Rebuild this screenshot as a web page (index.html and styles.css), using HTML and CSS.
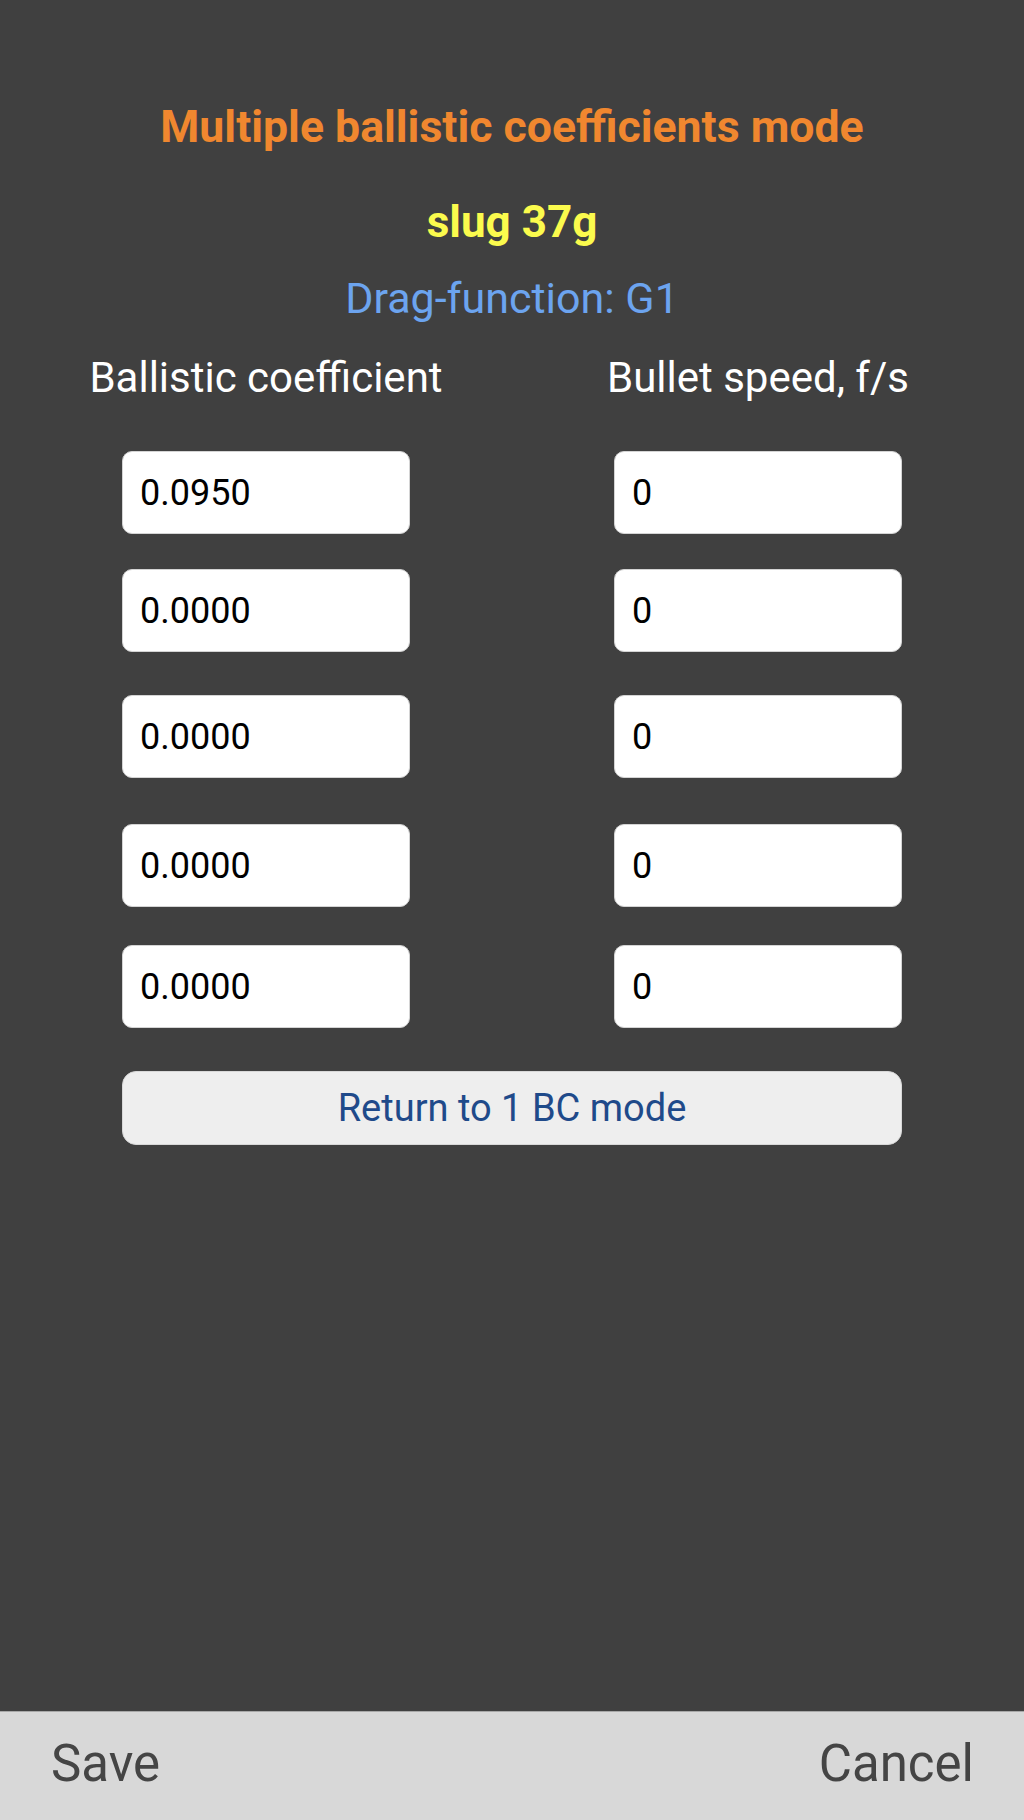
FILE: index.html
```html
<!DOCTYPE html>
<html lang="en">
<head>
<meta charset="utf-8">
<title>Multiple ballistic coefficients mode</title>
<link rel="stylesheet" href="styles.css">
</head>
<body>
<div class="screen">
  <main class="content">
    <h1 class="title">Multiple ballistic coefficients mode</h1>
    <div class="bullet-name">slug 37g</div>
    <div class="drag">Drag-function: G1</div>
    <div class="table">
      <div class="head-row">
        <div class="head">Ballistic coefficient</div>
        <div class="head">Bullet speed, f/s</div>
      </div>
      <div class="row">
        <input class="field" type="text" value="0.0950" readonly>
        <input class="field" type="text" value="0" readonly>
      </div>
      <div class="row">
        <input class="field" type="text" value="0.0000" readonly>
        <input class="field" type="text" value="0" readonly>
      </div>
      <div class="row">
        <input class="field" type="text" value="0.0000" readonly>
        <input class="field" type="text" value="0" readonly>
      </div>
      <div class="row">
        <input class="field" type="text" value="0.0000" readonly>
        <input class="field" type="text" value="0" readonly>
      </div>
      <div class="row">
        <input class="field" type="text" value="0.0000" readonly>
        <input class="field" type="text" value="0" readonly>
      </div>
    </div>
    <button class="return-btn" type="button">Return to 1 BC mode</button>
  </main>
  <footer class="bar">
    <span class="bar-btn">Save</span>
    <span class="bar-btn">Cancel</span>
  </footer>
</div>
</body>
</html>
```

FILE: styles.css
```css
* {
  box-sizing: border-box;
}

html, body {
  margin: 0;
  padding: 0;
}

body {
  background: #404040;
  font-family: Roboto, "Liberation Sans", Arial, sans-serif;
}

.screen {
  width: 1024px;
  height: 1820px;
  display: flex;
  flex-direction: column;
  background: #404040;
}

.content {
  flex: 1;
  display: flex;
  flex-direction: column;
  align-items: center;
  padding-top: 101px;
}

.title {
  margin: 0;
  font-size: 44.6px;
  line-height: 52px;
  font-weight: 700;
  color: #f0872f;
  white-space: nowrap;
}

.bullet-name {
  margin-top: 43px;
  font-size: 44px;
  line-height: 52px;
  font-weight: 700;
  color: #fbfb4d;
}

.drag {
  margin-top: 25px;
  font-size: 43px;
  line-height: 50px;
  color: #6ca4ef;
}

.table {
  width: 780px;
  margin-top: 30px;
  display: flex;
  flex-direction: column;
}

.head-row,
.row {
  display: grid;
  grid-template-columns: 288px 288px;
  justify-content: space-between;
}

.head {
  display: flex;
  justify-content: center;
  white-space: nowrap;
  font-size: 42px;
  line-height: 50px;
  color: #ffffff;
}

.row {
  height: 83px;
}

.head-row + .row {
  margin-top: 48px;
}

.row:nth-child(3) {
  margin-top: 35px;
}

.row:nth-child(4) {
  margin-top: 43px;
}

.row:nth-child(5) {
  margin-top: 46px;
}

.row:nth-child(6) {
  margin-top: 38px;
}

.field {
  width: 288px;
  height: 83px;
  margin: 0;
  padding: 0 17px;
  border: 1px solid #d4d4d4;
  border-radius: 10px;
  background: #ffffff;
  color: #000000;
  font-family: Roboto, "Liberation Sans", Arial, sans-serif;
  font-size: 36px;
  outline: none;
}

.return-btn {
  width: 780px;
  height: 74px;
  margin-top: 43px;
  border: 1px solid #d8d8d8;
  border-radius: 14px;
  background: #eeeeee;
  color: #1f4a8a;
  font-family: Roboto, "Liberation Sans", Arial, sans-serif;
  font-size: 38px;
  padding: 0;
}

.bar {
  height: 109px;
  flex: none;
  display: flex;
  justify-content: space-between;
  align-items: center;
  padding: 0 50px 6px 51px;
  background: #d8d8d8;
  border-top: 1px solid #a8a8a8;
}

.bar-btn {
  font-size: 51px;
  color: #454545;
}
```
